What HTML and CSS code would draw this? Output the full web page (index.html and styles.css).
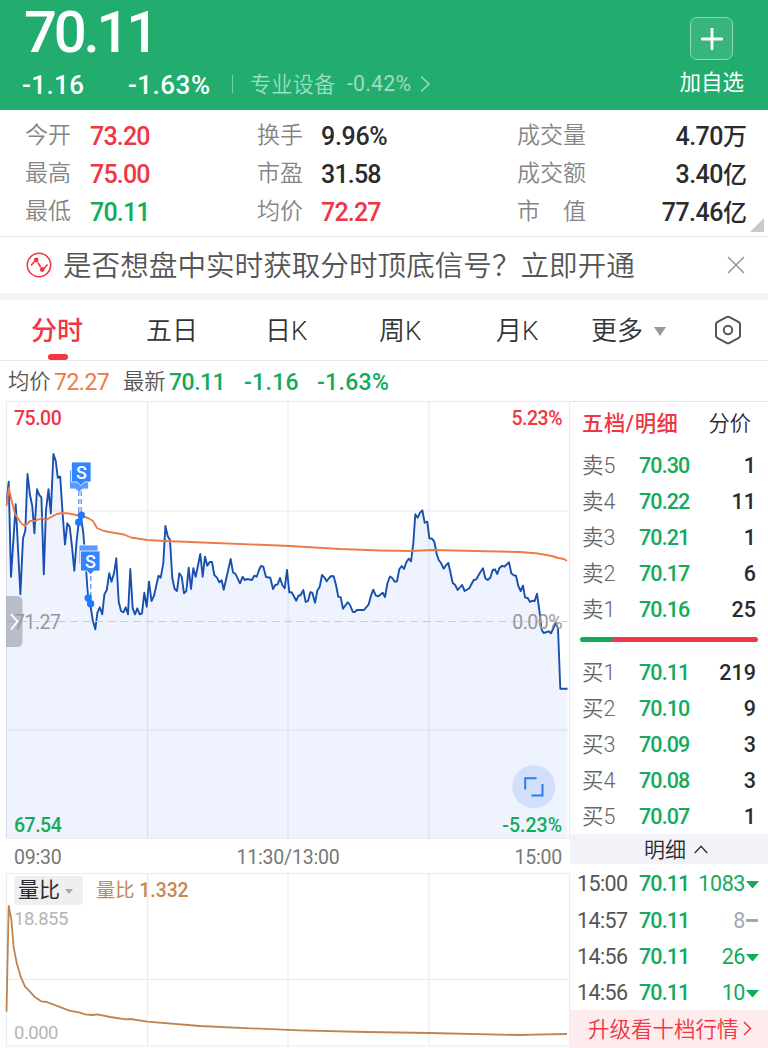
FILE: index.html
```html
<!DOCTYPE html>
<html lang="zh-CN">
	<head>
		<meta charset="UTF-8">
		<title>分时</title>
		<link rel="stylesheet" href="styles.css">
	</head>
	<body>
		<div class="header">
			<div class="quote">
				<div class="price">70.11</div>
				<div class="change">
					<span class="diff">-1.16</span>
					<span class="rate">-1.63%</span>
					<i class="line"></i>
					<span class="sector">专业设备</span>
					<span class="sector-rate">-0.42%</span>
					<svg width="11" height="18" viewBox="0 0 11 18"><path d="M1 1.5 9 9 1 16.5"/></svg>
				</div>
			</div>
			<div class="add">
				<div class="add-btn">
					<svg width="22" height="22" viewBox="0 0 22 22"><path d="M11 1v20M1 11h20"/></svg>
				</div>
				<span>加自选</span>
			</div>
		</div>

		<div class="stats">
			<label>今开</label><b class="red">73.20</b><label>换手</label><b class="wide">9.96%</b><label>成交量</label><b class="right">4.70<em>万</em></b>
			<label>最高</label><b class="red">75.00</b><label>市盈</label><b>31.58</b><label>成交额</label><b class="right">3.40<em>亿</em></b>
			<label>最低</label><b class="green">70.11</b><label>均价</label><b class="red">72.27</b><label>市　值</label><b class="right">77.46<em>亿</em></b>
			<i class="corner"></i>
		</div>

		<div class="notice">
			<svg class="signal" width="26" height="26" viewBox="0 0 26 26">
				<circle cx="13" cy="13" r="11.7"/>
				<path d="M5 13.5 8.5 9.5M11.8 10.5l2.8 4.5M18 16.5l3.5-4"/>
				<circle class="dot" cx="10.2" cy="8" r="2.4"/>
				<circle class="dot" cx="16.2" cy="17.5" r="2.4"/>
			</svg>
			<span class="notice-text">是否想盘中实时获取分时顶底信号？立即开通</span>
			<svg class="close" width="18" height="18" viewBox="0 0 18 18"><path d="M1 1l16 16M17 1 1 17"/></svg>
		</div>

		<div class="tabs">
			<span class="active">分时</span>
			<span>五日</span>
			<span>日K</span>
			<span>周K</span>
			<span>月K</span>
			<span class="more">更多<i></i></span>
			<svg class="setting" width="28" height="30" viewBox="0 0 28 30">
				<path d="M12.5 2.2Q14 1.4 15.5 2.2L24.8 7.2Q26 8 26 9.3V20.7Q26 22 24.8 22.8L15.5 27.8Q14 28.6 12.5 27.8L3.2 22.8Q2 22 2 20.7V9.3Q2 8 3.2 7.2Z"/>
				<circle cx="14" cy="15" r="4.2"/>
			</svg>
		</div>

		<div class="info">
			<label>均价</label><b class="orange">72.27</b>
			<label>最新</label><b class="green">70.11</b>
			<b class="green">-1.16</b>
			<b class="green">-1.63%</b>
		</div>

		<div class="main">
			<div class="charts">
				<svg class="trend" width="570" height="438" viewBox="0 401 570 438">
					<clipPath id="plot"><rect x="6" y="401" width="561.5" height="437"/></clipPath>
					<!-- 走势线和面积共用一条折线，多余的边由 clipPath 裁掉 -->
					<polygon class="now" clip-path="url(#plot)" points="-5,850 -5,503 6.5,503 8.7,481.7 11,576.7 15.7,504.3 20.4,594.3 23,538.3 25.3,530.7 27.5,474 30,495 32.3,506 34.4,533.3 37,489.3 39.3,495 41.4,497.3 43.8,574.3 46,510 48.5,489.3 50.8,513.3 53.4,454 55.7,460.7 57.8,477.7 60.2,476.7 62.6,513.3 65,544.5 67.3,523.3 69.7,526.7 72,546.7 74.3,570.7 76.7,540 78.7,522.7 81,516.7 83.3,533 85.5,560 87.3,587 88.5,598 90.7,607 92.7,620 95.3,629.3 97.4,612.7 99.8,607.3 102.2,614.3 104.4,594.3 106.8,590 109.2,573.3 111.5,581.7 114,573.3 116.3,558.3 118.7,601.7 121,611 123.4,612.3 125.7,607.3 128,614.3 130.3,569 132.7,608.3 135,614.3 137.3,608.3 139.7,614.3 142,613.3 144.3,592.7 146.7,606.7 149,581.7 151.5,601 154,595.7 158.5,575.7 160.7,577.7 163.3,563.3 165.4,526 167.7,536 170,540 172.3,578.3 174.7,589 177,591 179.3,573.3 181.7,576.7 184,593.3 186.3,591 188.7,567.7 191,589 193.3,568.3 195.7,576.7 200.3,554 202.7,576.7 205,556.7 207.3,565.7 209.7,562 212,562 214.3,575 217,577.7 219.3,582.3 221.7,580.3 223.7,589.7 230.7,559 233,572.3 235.7,574.3 240,583.3 242.7,576.7 244.7,580 247.3,579 252,580 254.3,575.7 256.7,576.7 259,570 261,566 263.3,566.7 266,577 270.3,577.7 273,589 275.3,585 277.7,584.3 280,578 282.3,585 284.7,588.3 287,570 289.3,592.3 291.7,592.3 296.3,600.7 298.3,596 300.7,595 303.3,590 305.7,602 308,601 310.3,592.3 312.3,592.7 315,602.7 317.3,590.7 319.7,586.7 322,575 324.3,577.3 326.7,581.3 329,578 331.3,576 333.7,576.3 336,585 338.3,596.7 340.7,597.3 343,608.7 347.7,602.3 350,605 352.7,611.7 354.7,612 357,610 364,610 368.7,604.3 371,595.7 373.3,589.7 375.7,595.3 378.3,596.3 382.7,592.7 385,597 387.5,583 390,576.5 392,577.7 394.7,581.7 397,581.3 399.3,569.3 401.7,566 404,569 406.3,562.3 408.7,558.7 411,561.3 413.3,543.3 415.3,514.3 417.7,517.7 420,512.7 422.3,510.3 424.7,522.7 427.3,521.7 429.3,538.3 432,538.7 434.3,541.7 436.7,554 438.7,560 441,563 443.7,568.7 445.7,565.7 448.3,563 450.3,571.7 452.7,583 455,584.7 457.7,590 462,585 464.7,591 469.3,588.3 473.7,580 476.3,579.3 480,572.7 483,568.3 485.3,578.3 487.7,580 490.3,577.7 492.7,570 495,569.3 497.3,574 499.3,568.3 502,565.7 504.3,566.7 509,562.3 511.3,573.3 513.7,575.3 516,575.7 518.3,586 520.7,591 523,585.7 525,597.3 527.7,598 530,602 532.3,600.7 534.7,601 537,593.7 539.3,610 541.7,630 543.7,633 548.7,631.3 551,633.3 555.7,623 558,628.3 560.3,688.7 575,688.7 575,850"/>
					<path class="grid" d="M6 401.5H570M6 511H570M6 730H570M6 838.5H570M6.5 401V839M147.5 401V839M288 401V839M429 401V839M569.5 401V839"/>
					<path class="zero" d="M7 621.5H567"/>
					<polyline class="avg" points="6.5,506 8.7,488 12,502 15,514 19,520 22,524 25,526 28,523 30,521 35,521 42,518 46,520 52,516.5 57,514 62,513 69,513.5 76,515 82,516 88,518 93,521 97,528 104,531 112,532.5 124,534.5 131,537.5 147,540 165,541 215,543 290,546 340,549 380,550.5 412,551 432,550 520,552 538,553.5 552,556 558,558 564,559 567,561"/>

					<!-- 卖出标记 -->
					<path class="sell back" d="M69.500 470H88.500V489H83L79 492 75 489H69.500Z"/>
					<path class="sell" d="M71.5 462H91V482H85L81 485.5 77 482H71.5Z"/>
					<text class="s" x="81.2" y="478.5">S</text>
					<path class="sell back" d="M79 545H98V564H79Z"/>
					<path class="sell" d="M80.5 551H100V571H94L90.5 574.5 87 571H80.5Z"/>
					<text class="s" x="90.3" y="567.5">S</text>
					<path class="drop-bg" d="M80 492V513M90.8 576V602"/>
					<path class="drop" d="M78.8 491V520M81.2 491V513M90.8 576V602"/>
					<circle class="dot" cx="81.3" cy="515.3" r="3.7"/>
					<circle class="dot" cx="78.7" cy="522.3" r="3.7"/>
					<circle class="dot" cx="88.2" cy="598" r="3.7"/>
					<circle class="dot" cx="90.6" cy="603.8" r="3.7"/>

					<path class="handle" d="M6 596H17Q22.5 596 22.5 602V641Q22.5 647 17 647H6Z"/>
					<text class="gray" x="14" y="628.5">71.27</text>
					<path class="handle-arrow" d="M11 614 17.5 621.5 11 629.5"/>

					<circle class="full" cx="533.7" cy="786.7" r="21.5"/>
					<path class="full-icon" d="M525.2 789.5V778.2H536.5M531.5 795.5H542.5V784"/>

					<text class="red" x="14" y="425">75.00</text>
					<text class="red end" x="562" y="425">5.23%</text>
					<text class="gray end" x="562" y="628.5">0.00%</text>
					<text class="green" x="14" y="832">67.54</text>
					<text class="green end low" x="562" y="832">-5.23%</text>
				</svg>
				<div class="times"><span>09:30</span><span>11:30/13:00</span><span>15:00</span></div>
				<div class="ratio">
					<svg width="570" height="175" viewBox="0 873 570 175">
						<path class="grid" d="M6 873.5H570M6 979.5H570M6 1046H570M6.5 873V1046M147.5 873V1046M288 873V1046M429 873V1046M569.5 873V1046"/>
						<polyline class="liangbi" points="6.5,1011.7 8.7,906 11.3,919.3 13.7,947.7 16.7,963 20.7,976.7 25,986.7 30.7,992.3 35,997.3 41.3,1001.3 46.7,1002 58.3,1006.3 69.3,1010.7 80,1012.7 85,1014.3 92.3,1015 97.3,1014.3 110,1017 126,1019.3 130.7,1019 147.3,1021.7 200,1026 250,1028.3 300,1030.3 366.7,1032 429.3,1033 520,1035 533,1034.7 567,1034"/>
						<text class="small" x="14" y="924.5">18.855</text>
						<text class="small" x="14" y="1039">0.000</text>
					</svg>
					<div class="ratio-head"><span class="select">量比<i></i></span><span class="value">量比 <b>1.332</b></span></div>
				</div>
			</div>

			<div class="side">
				<div class="side-tabs"><b>五档/明细</b><span>分价</span></div>
				<ul class="book">
					<li><label>卖5</label><b>70.30</b><em>1</em></li>
					<li><label>卖4</label><b>70.22</b><em>11</em></li>
					<li><label>卖3</label><b>70.21</b><em>1</em></li>
					<li><label>卖2</label><b>70.17</b><em>6</em></li>
					<li><label>卖1</label><b>70.16</b><em>25</em></li>
				</ul>
				<div class="bar"></div>
				<ul class="book">
					<li><label>买1</label><b>70.11</b><em>219</em></li>
					<li><label>买2</label><b>70.10</b><em>9</em></li>
					<li><label>买3</label><b>70.09</b><em>3</em></li>
					<li><label>买4</label><b>70.08</b><em>3</em></li>
					<li><label>买5</label><b>70.07</b><em>1</em></li>
				</ul>
				<div class="detail-head">明细<svg width="14" height="9" viewBox="0 0 14 9"><path d="M.8 8 7 1.2 13.2 8"/></svg></div>
				<ul class="detail">
					<li><span>15:00</span><b>70.11</b><em>1083</em><i class="down"></i></li>
					<li><span>14:57</span><b>70.11</b><em class="flat-num">8</em><i class="flat"></i></li>
					<li><span>14:56</span><b>70.11</b><em>26</em><i class="down"></i></li>
					<li><span>14:56</span><b>70.11</b><em>10</em><i class="down"></i></li>
				</ul>
				<div class="upgrade">升级看十档行情<svg width="9" height="15" viewBox="0 0 9 15"><path d="M1 1l6.5 6.5L1 14"/></svg></div>
			</div>
		</div>
	</body>
</html>
```

FILE: styles.css
```css
*{
	box-sizing: border-box;
}
body{
	margin: 0;
	width: 768px;
	height: 1048px;
	overflow: hidden;
	background: #fff;
	color: #2b2b2e;
	font-family: Roboto, "Noto Sans CJK SC", sans-serif;
}
ul{
	margin: 0;
	padding: 0;
	list-style: none;
}
i, em{
	font-style: normal;
}
b{
	font-weight: 500;
}
svg{
	display: block;
	fill: none;
	flex: none;
}
.red{
	color: #ee3644;
	fill: #ee3644;
}
.green{
	color: #12ab5c;
	fill: #12ab5c;
}
.orange{
	color: #ee7a42;
}

/*顶部报价*/
.header{
	display: flex;
	justify-content: space-between;
	height: 110px;
	padding: 0 24px 0 22px;
	background: #22ac6e;
	color: #fff;
}
.price{
	height: 64px;
	padding-left: 2px;
	font-size: 58px;
	line-height: 64px;
	font-weight: 500;
	letter-spacing: -3.2px;
}
.change{
	display: flex;
	align-items: center;
	height: 40px;
	padding-top: 1px;
	font-size: 26px;
	font-weight: 500;
}
.diff{
	width: 106px;
	letter-spacing: 0.4px;
}
.rate{
	width: 103px;
	letter-spacing: 0.5px;
}
.line{
	width: 1px;
	height: 18px;
	margin: 0 17px 2px 1px;
	background: #7acda8;
}
.sector, .sector-rate{
	color: #9fdcc1;
	font-size: 21.3px;
	font-weight: 350;
}
.sector{
	width: 97px;
	margin-top: -5px;
}
.sector-rate{
	width: 73px;
	margin-top: -2px;
	font-weight: 400;
	letter-spacing: 0.2px;
}
.change svg{
	margin-top: -2px;
	stroke: #9fdcc1;
	stroke-width: 1.5;
}
.add{
	display: flex;
	flex-direction: column;
	align-items: center;
	padding-top: 17px;
	font-size: 21.5px;
	line-height: 32px;
}
.add-btn{
	display: flex;
	align-items: center;
	justify-content: center;
	width: 43px;
	height: 43px;
	margin-bottom: 7px;
	border: 1px solid #91d6b7;
	border-radius: 7px;
	background: #38b47d;
}
.add-btn svg{
	stroke: #fff;
	stroke-width: 2.8;
	stroke-linecap: round;
}

/*指标*/
.stats{
	position: relative;
	display: grid;
	grid-template-columns: 65px 167px 64px 196px 100px 130px;
	grid-template-rows: repeat(3, 38px);
	align-content: start;
	height: 127px;
	padding: 7px 0 0 25px;
	border-bottom: 1px solid #ebebeb;
	line-height: 38px;
}
.stats label{
	font-size: 23px;
	font-weight: 350;
	line-height: 37px;
	color: #858585;
}
.stats b{
	font-size: 25px;
	line-height: 40px;
	letter-spacing: -0.8px;
}
.stats .wide{
	letter-spacing: -0.3px;
}
.stats em{
	font-size: 24px;
	letter-spacing: 0;
}
.stats .right{
	text-align: right;
	letter-spacing: -0.5px;
}
.corner{
	position: absolute;
	right: 4px;
	bottom: 4px;
	border-left: 14px solid transparent;
	border-bottom: 14px solid #c9c9c9;
}

/*提示条*/
.notice{
	display: flex;
	align-items: center;
	height: 63px;
	padding: 0 23px 0 26px;
	border-bottom: 7px solid #f3f5fa;
}
.signal{
	stroke: #ee3644;
	stroke-width: 1.6;
}
.signal .dot{
	fill: #ee3644;
	stroke: none;
}
.notice-text{
	flex: 1;
	margin-left: 11px;
	font-size: 28.6px;
	line-height: 40px;
	padding-top: 1px;
	font-weight: 350;
	color: #555;
}
.close{
	stroke: #8f8f8f;
	stroke-width: 1.4;
}

/*周期切换*/
.tabs{
	display: grid;
	grid-template-columns: 115px 119px 114px 117px 95px 123px 28px;
	align-items: center;
	height: 61px;
	padding-left: 31px;
	border-bottom: 1px solid #e8e8e8;
	font-size: 26px;
	line-height: 62px;
	font-weight: 350;
	color: #333;
}
.tabs span{
	height: 60px;
}
.tabs .active{
	position: relative;
	color: #f23645;
	font-weight: 500;
}
.tabs .active::after{
	content: "";
	position: absolute;
	left: 17px;
	bottom: 0;
	width: 20px;
	height: 6px;
	border-radius: 3px;
	background: #f23645;
}
.more i{
	display: inline-block;
	margin-left: 11px;
	vertical-align: 4px;
	border: 6.5px solid transparent;
	border-top: 9px solid #999;
	border-bottom: 0;
}
.setting{
	stroke: #555;
	stroke-width: 2;
}

.info{
	display: grid;
	grid-template-columns: 46px 69px 46px 74px 73px 90px;
	align-items: center;
	height: 40px;
	padding-left: 8px;
	line-height: 40px;
}
.info label{
	font-size: 21.3px;
	font-weight: 350;
	color: #555;
}
.info b{
	padding-top: 2px;
	font-size: 23px;
	letter-spacing: -0.5px;
}
.info .green:nth-child(n+5){
	padding-left: 1px;
	letter-spacing: 0.3px;
}
.info .orange{
	font-weight: 400;
}

.main{
	display: flex;
	height: 647px;
}
.charts{
	width: 570px;
}
.grid{
	stroke: rgba(30, 35, 50, 0.09);
	stroke-width: 1.2;
}
.zero{
	stroke: #c3cedb;
	stroke-dasharray: 8 4.6;
}
.now{
	fill: rgba(70, 125, 245, 0.09);
	stroke: #1950b0;
	stroke-width: 1.9;
	stroke-linejoin: round;
}
.avg{
	stroke: #f07a45;
	stroke-width: 1.9;
	stroke-linejoin: round;
}
.charts text{
	font-size: 19.5px;
	font-weight: 500;
	letter-spacing: -0.5px;
}
.charts .end{
	text-anchor: end;
}
.charts .low{
	letter-spacing: 0;
}
.charts .gray{
	fill: #96989c;
	font-weight: 400;
}
.sell{
	fill: #3384ff;
	stroke: #fff;
	stroke-width: 0.8;
}
.back{
	fill: #5b9bff;
}
.charts .s{
	fill: #fff;
	font-size: 18px;
	text-anchor: middle;
}
.drop-bg{
	stroke: #fff;
	stroke-width: 4;
}
.drop{
	stroke: #5b95ee;
	stroke-width: 1.3;
	stroke-dasharray: 5 3;
}
.trend .dot{
	fill: #1f7aff;
}
.handle{
	fill: rgba(148, 153, 165, 0.6);
}
.handle-arrow{
	stroke: #fff;
	stroke-width: 1.8;
}
.full{
	fill: #d1dffb;
}
.full-icon{
	stroke: #2f7cf0;
	stroke-width: 2;
}
.times{
	display: flex;
	justify-content: space-between;
	height: 34px;
	padding: 2px 8px 0 14px;
	font-size: 19.5px;
	line-height: 34px;
	color: #777;
	letter-spacing: -0.2px;
}
.ratio{
	position: relative;
}
.liangbi{
	stroke: #bd8450;
	stroke-width: 1.8;
	stroke-linejoin: round;
}
.charts .small{
	font-size: 18.5px;
	font-weight: 400;
	fill: #b5b5b5;
}
.ratio-head{
	position: absolute;
	left: 14px;
	top: 3px;
	display: flex;
	line-height: 30px;
	font-size: 20px;
}
.select{
	width: 69px;
	height: 29px;
	margin-right: 13px;
	padding-left: 4px;
	border-radius: 4px;
	background: #efefef;
	font-size: 21px;
	line-height: 28px;
}
.select i{
	display: inline-block;
	margin-left: 5px;
	vertical-align: 3px;
	border: 4.5px solid transparent;
	border-top: 5.5px solid #aaa;
	border-bottom: 0;
}
.value{
	color: #c78752;
	font-size: 19.3px;
}

/*右侧盘口*/
.side{
	width: 198px;
	border-top: 1px solid #e5e5e5;
}
.side-tabs{
	display: flex;
	justify-content: space-between;
	height: 45px;
	padding: 0 17px 0 12px;
	font-size: 21.3px;
	line-height: 43px;
	font-weight: 350;
}
.side-tabs b{
	color: #ee3644;
	letter-spacing: 0.6px;
}
.book li, .detail li{
	display: grid;
	grid-template-columns: 57px 60px 1fr;
	height: 36.1px;
	padding: 0 12px;
	line-height: 37px;
	font-size: 21.5px;
}
.book label{
	font-weight: 350;
	color: #666;
}
.book b, .detail b{
	color: #12ab5c;
	letter-spacing: -0.9px;
}
.book em{
	text-align: right;
	font-weight: 500;
}
.bar{
	height: 5px;
	margin: 10px 10px 11.5px;
	border-radius: 3px;
	background: linear-gradient(125deg, #12ab5c 28px, #f23645 28.5px);
}
.detail-head{
	display: flex;
	align-items: center;
	justify-content: center;
	height: 30px;
	padding: 0 0 2px 14px;
	background: #f1f3f8;
	font-size: 21px;
	font-weight: 350;
}
.detail-head svg{
	margin: 2px 0 0 8px;
	stroke: #333;
	stroke-width: 1.4;
}
.detail{
	padding-top: 1px;
}
.detail li{
	grid-template-columns: 62px 54px 1fr 14px;
	padding: 0 9px 0 7px;
	align-items: center;
}
.detail span{
	color: #555;
	letter-spacing: -0.6px;
}
.detail em{
	color: #12ab5c;
	text-align: right;
	letter-spacing: -0.4px;
}
.detail .flat-num{
	color: #a2a7b2;
}
.down{
	margin: 2px 0 0 1px;
	border: 6.5px solid transparent;
	border-top: 7.5px solid #12ab5c;
	border-bottom: 0;
}
.flat{
	width: 12px;
	height: 3px;
	margin-left: 1px;
	background: #a2a7b2;
}
.upgrade{
	display: flex;
	align-items: center;
	height: 38px;
	padding: 0 0 3px 18px;
	background: #fdebed;
	color: #ee3644;
	font-size: 21.5px;
	font-weight: 350;
}
.upgrade svg{
	margin: 2px 0 0 4px;
	stroke: #ee3644;
	stroke-width: 1.5;
}
```
